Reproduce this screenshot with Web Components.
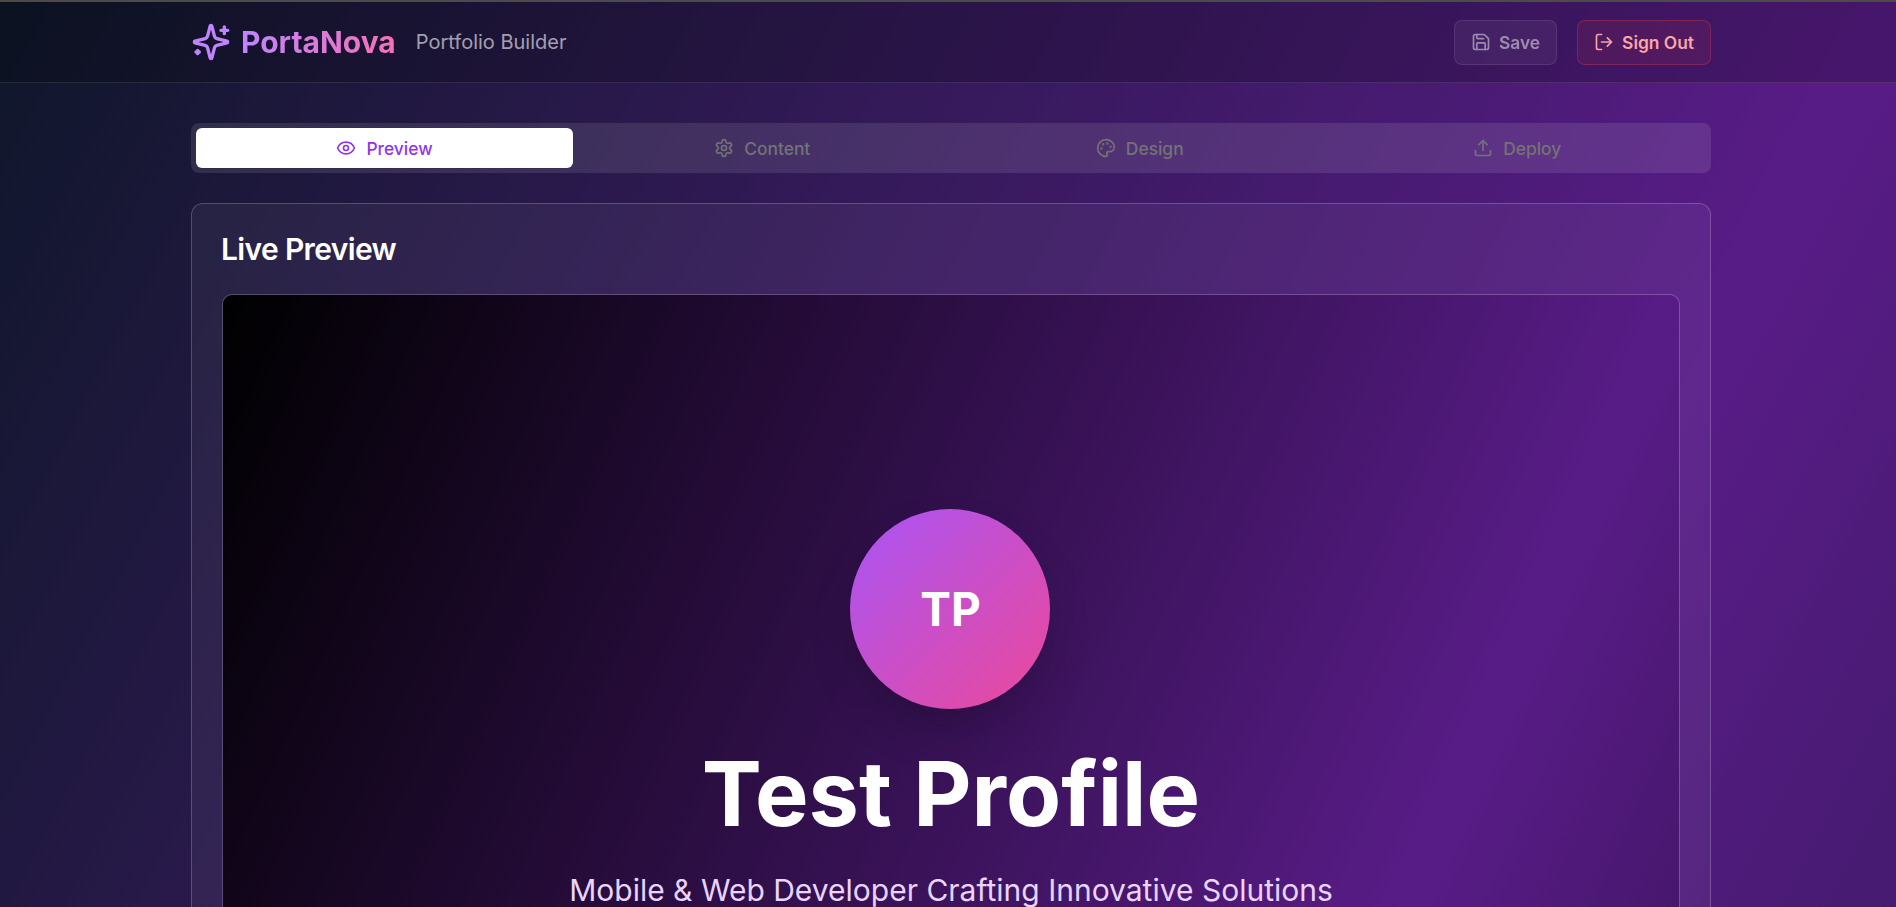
<!DOCTYPE html>
<html lang="en"><head><meta charset="utf-8"><title>PortaNova</title>
<style>html,body{margin:0;padding:0;background:#0f172a;overflow:hidden}body{font-family:Inter,"Liberation Sans",sans-serif}</style>
</head><body>
<app-shell>
  <app-header slot="header">
    <brand-logo></brand-logo>
    <span slot="tagline">Portfolio Builder</span>
    <action-button slot="actions" kind="muted" icon="save">Save</action-button>
    <action-button slot="actions" kind="danger" icon="logout">Sign Out</action-button>
  </app-header>
  <tab-bar>
    <tab-item icon="eye" active>Preview</tab-item>
    <tab-item icon="gear">Content</tab-item>
    <tab-item icon="palette">Design</tab-item>
    <tab-item icon="upload">Deploy</tab-item>
  </tab-bar>
  <preview-card heading="Live Preview">
    <profile-hero initials="TP" name="Test Profile" tagline="Mobile &amp; Web Developer Crafting Innovative Solutions"></profile-hero>
  </preview-card>
</app-shell>
<script>
const ICONS={
 save:'<path d="M15.2 3a2 2 0 0 1 1.4.6l3.8 3.8a2 2 0 0 1 .6 1.4V19a2 2 0 0 1-2 2H5a2 2 0 0 1-2-2V5a2 2 0 0 1 2-2z"/><path d="M17 21v-7a1 1 0 0 0-1-1H8a1 1 0 0 0-1 1v7"/><path d="M7 3v4a1 1 0 0 0 1 1h7"/>',
 logout:'<path d="M9 21H5a2 2 0 0 1-2-2V5a2 2 0 0 1 2-2h4"/><path d="m16 17 5-5-5-5"/><path d="M21 12H9"/>',
 eye:'<path d="M2.062 12.348a1 1 0 0 1 0-.696 10.75 10.75 0 0 1 19.876 0 1 1 0 0 1 0 .696 10.75 10.75 0 0 1-19.876 0"/><circle cx="12" cy="12" r="3"/>',
 gear:'<path d="M12.22 2h-.44a2 2 0 0 0-2 2v.18a2 2 0 0 1-1 1.73l-.43.25a2 2 0 0 1-2 0l-.15-.08a2 2 0 0 0-2.73.73l-.22.38a2 2 0 0 0 .73 2.73l.15.1a2 2 0 0 1 1 1.72v.51a2 2 0 0 1-1 1.74l-.15.09a2 2 0 0 0-.73 2.73l.22.38a2 2 0 0 0 2.73.73l.15-.08a2 2 0 0 1 2 0l.43.25a2 2 0 0 1 1 1.73V20a2 2 0 0 0 2 2h.44a2 2 0 0 0 2-2v-.18a2 2 0 0 1 1-1.73l.43-.25a2 2 0 0 1 2 0l.15.08a2 2 0 0 0 2.73-.73l.22-.39a2 2 0 0 0-.73-2.73l-.15-.08a2 2 0 0 1-1-1.74v-.5a2 2 0 0 1 1-1.74l.15-.09a2 2 0 0 0 .73-2.73l-.22-.38a2 2 0 0 0-2.73-.73l-.15.08a2 2 0 0 1-2 0l-.43-.25a2 2 0 0 1-1-1.73V4a2 2 0 0 0-2-2z"/><circle cx="12" cy="12" r="3"/>',
 palette:'<circle cx="13.5" cy="6.5" r=".5" fill="currentColor"/><circle cx="17.5" cy="10.5" r=".5" fill="currentColor"/><circle cx="8.5" cy="7.5" r=".5" fill="currentColor"/><circle cx="6.5" cy="12.5" r=".5" fill="currentColor"/><path d="M12 2C6.5 2 2 6.5 2 12s4.5 10 10 10c.926 0 1.648-.746 1.648-1.688 0-.437-.18-.835-.437-1.125-.29-.289-.438-.652-.438-1.125a1.64 1.64 0 0 1 1.668-1.668h1.996c3.051 0 5.555-2.503 5.555-5.554C21.965 6.012 17.461 2 12 2z"/>',
 upload:'<path d="M21 15v4a2 2 0 0 1-2 2H5a2 2 0 0 1-2-2v-4"/><path d="m17 8-5-5-5 5"/><path d="M12 3v12"/>',
 sparkles:'<path d="M9.937 15.5A2 2 0 0 0 8.5 14.063l-6.135-1.582a.5.5 0 0 1 0-.962L8.5 9.936A2 2 0 0 0 9.937 8.5l1.582-6.135a.5.5 0 0 1 .963 0L14.063 8.5A2 2 0 0 0 15.5 9.937l6.135 1.581a.5.5 0 0 1 0 .964L15.5 14.063a2 2 0 0 0-1.437 1.437l-1.582 6.135a.5.5 0 0 1-.963 0z"/><path d="M20 3v4"/><path d="M22 5h-4"/><path d="M4 17v2"/><path d="M5 18H3"/>'
};
const svg=(n,s)=>`<svg xmlns="http://www.w3.org/2000/svg" width="${s}" height="${s}" viewBox="0 0 24 24" fill="none" stroke="currentColor" stroke-width="2" stroke-linecap="round" stroke-linejoin="round" aria-hidden="true">${ICONS[n]}</svg>`;
class Base extends HTMLElement{
  render(html){this.attachShadow({mode:'open'}).innerHTML=html;}
}
customElements.define('app-shell',class extends Base{constructor(){super();this.render(`<style>
 :host{display:block;height:907px;overflow:hidden}
 .page{height:3650px;background:linear-gradient(to bottom right,#0f172a,#581c87,#0f172a);color:#fff}
 main{padding:40px 185px 0 191px;display:flex;flex-direction:column;gap:30px}
</style><div class="page"><slot name="header"></slot><main><slot></slot></main></div>`);}});
customElements.define('app-header',class extends Base{constructor(){super();this.render(`<style>
 :host{display:flex;align-items:center;justify-content:space-between;height:80px;padding:0 185px 0 191px;background:rgba(0,0,0,.2);border-top:2px solid #4b4c4a;border-bottom:1px solid rgba(255,255,255,.1)}
 .left{display:flex;align-items:center;gap:20px}
 .right{display:flex;align-items:center;gap:20px}
 ::slotted([slot=tagline]){font-size:20px;color:rgba(255,255,255,.6)}
</style><div class="left"><slot></slot><slot name="tagline"></slot></div><div class="right"><slot name="actions"></slot></div>`);}});
customElements.define('brand-logo',class extends Base{constructor(){super();this.render(`<style>
 :host{display:flex;align-items:center;gap:10px}
 svg{display:block;color:#c084fc}
 span{font-size:30px;line-height:36px;font-weight:700;background:linear-gradient(to right,#c084fc,#f472b6);-webkit-background-clip:text;background-clip:text;color:transparent}
</style>${svg('sparkles',40)}<span>PortaNova</span>`);}});
customElements.define('action-button',class extends Base{constructor(){super();const k=this.getAttribute('kind');this.render(`<style>
 :host{display:block}
 button{all:unset;box-sizing:border-box;display:flex;align-items:center;gap:8px;height:45px;padding:0 16px;border-radius:8px;font:600 17.4px Inter,"Liberation Sans",sans-serif;border:1px solid}
 svg{display:block}
 .muted{background:rgba(255,255,255,.1);border-color:rgba(255,255,255,.2);color:#fff;opacity:.5}
 .danger{background:rgba(239,68,68,.1);border-color:rgba(239,68,68,.3);color:#fca5a5}
</style><button class="${k}">${svg(this.getAttribute('icon'),20)}<slot></slot></button>`);}});
customElements.define('tab-bar',class extends Base{constructor(){super();this.render(`<style>
 :host{display:grid;grid-template-columns:repeat(4,1fr);height:50px;box-sizing:border-box;padding:5px;border-radius:8px;background:rgba(255,255,255,.1)}
</style><slot></slot>`);}});
customElements.define('tab-item',class extends Base{constructor(){super();this.render(`<style>
 :host{display:flex;align-items:center;justify-content:center;gap:10px;border-radius:6px;font-size:17.4px;font-weight:500;color:#737373}
 :host([active]){background:#fff;color:#9333ea;box-shadow:0 1px 2px rgba(0,0,0,.05);margin-right:.5px}
 svg{display:block}
</style>${svg(this.getAttribute('icon'),20)}<slot></slot>`);}});
customElements.define('preview-card',class extends Base{constructor(){super();this.render(`<style>
 :host{display:block;box-sizing:border-box;padding:30px;border-radius:12px;background:rgba(255,255,255,.05);border:1px solid rgba(255,255,255,.2)}
 h2{margin:0 0 30px -1px;font-size:30px;line-height:30px;font-weight:600;letter-spacing:-.65px;color:#fff}
 .frame{box-sizing:border-box;height:3250px;border-radius:10px;border:1px solid rgba(255,255,255,.2);background:linear-gradient(to bottom right,#000,#581c87,#000) padding-box;overflow:hidden}
</style><h2>${this.getAttribute('heading')}</h2><div class="frame"><slot></slot></div>`);}});
customElements.define('profile-hero',class extends Base{constructor(){super();this.render(`<style>
 :host{display:flex;flex-direction:column;align-items:center;padding-top:214px;text-align:center}
 .avatar{box-sizing:border-box;width:200px;height:200px;margin-right:2px;padding-left:1px;border-radius:50%;display:flex;align-items:center;justify-content:center;background:linear-gradient(135deg,#a855f7,#ec4899);box-shadow:0 25px 50px -12px rgba(0,0,0,.25);font-size:46px;font-weight:700;color:#fff}
 h1{margin:31px 0 0;font-size:90px;line-height:108px;font-weight:700;color:#fff}
 p{margin:26px 0 0;font-size:30px;line-height:32px;color:#e9d5ff}
</style><div class="avatar">${this.getAttribute('initials')}</div><h1>${this.getAttribute('name')}</h1><p>${this.getAttribute('tagline')}</p>`);}});
</script>
</body></html>
